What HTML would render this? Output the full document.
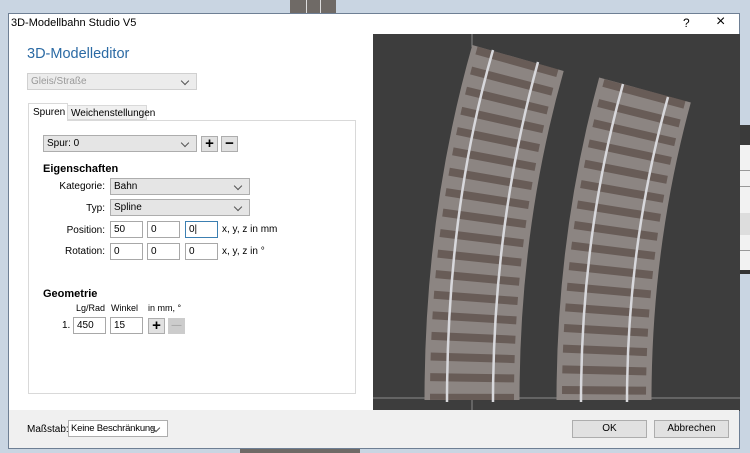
<!DOCTYPE html>
<html><head><meta charset="utf-8"><style>
*{margin:0;padding:0;box-sizing:border-box}
body{width:750px;height:453px;overflow:hidden;background:#c9d5e2;font-family:"Liberation Sans",sans-serif;font-size:10px;color:#000;position:relative}
div{white-space:nowrap}
.a{position:absolute}
.inp{position:absolute;border:1px solid #a8a8a8;background:#fff;height:17px;padding:2px 3px;font-size:10px}
.cb{position:absolute;border:1px solid #adadad;background:#e5e5e5;height:17px;padding:2px 3px;font-size:10px;overflow:hidden}
.cb:after{content:"";position:absolute;right:8px;top:4px;width:5px;height:5px;border-right:1px solid #555;border-bottom:1px solid #555;transform:rotate(45deg)}
.btn{position:absolute;border:1px solid #adadad;background:#e1e1e1;text-align:center;font-size:10px}
.lbl{position:absolute;text-align:right;width:60px}
</style></head><body>
<div class="a" style="left:290px;top:0;width:46px;height:13px;background:#6f6a66"></div>
<div class="a" style="left:306px;top:0;width:1px;height:13px;background:#ddd"></div>
<div class="a" style="left:320px;top:0;width:1px;height:13px;background:#ddd"></div>
<div class="a" style="left:740px;top:125px;width:10px;height:20px;background:#3a3a3a"></div>
<div class="a" style="left:740px;top:145px;width:10px;height:125px;background:#f2f2f2"></div>
<div class="a" style="left:740px;top:170px;width:10px;height:1px;background:#999"></div>
<div class="a" style="left:740px;top:186px;width:10px;height:1px;background:#999"></div>
<div class="a" style="left:740px;top:213px;width:10px;height:22px;background:#ddd"></div>
<div class="a" style="left:740px;top:250px;width:10px;height:1px;background:#999"></div>
<div class="a" style="left:740px;top:270px;width:10px;height:4px;background:#333"></div>
<div class="a" style="left:240px;top:449px;width:120px;height:4px;background:#6f6a66"></div>
<div class="a" style="left:8px;top:13px;width:732px;height:436px;background:#fff;border:1px solid #6e7f94"></div>
<div class="a" style="left:11px;top:17px;font-size:11px">3D-Modellbahn Studio V5</div>
<div class="a" style="left:683px;top:16px;font-size:12px">?</div>
<div class="a" style="left:716px;top:13px;font-size:16px;font-weight:300">×</div>
<div class="a" style="left:27px;top:46px;font-size:14.5px;color:#2b6aa4">3D-Modelleditor</div>
<div class="cb" style="left:27px;top:73px;width:170px;background:#ececec;border-color:#d0d0d0;color:#999">Gleis/Straße</div>
<div class="a" style="left:28px;top:120px;width:328px;height:274px;border:1px solid #d9d9d9"></div>
<div class="a" style="left:28px;top:103px;width:40px;height:18px;border:1px solid #d9d9d9;border-bottom:none;background:#fff;padding:3px 4px">Spuren</div>
<div class="a" style="left:67px;top:105px;width:80px;height:15px;border:1px solid #d9d9d9;background:#f0f0f0;padding:2px 3px">Weichenstellungen</div>
<div class="cb" style="left:43px;top:135px;width:154px">Spur: 0</div>
<div class="btn" style="left:201px;top:136px;width:17px;height:16px;font-size:15px;line-height:13px;font-weight:bold">+</div>
<div class="btn" style="left:221px;top:136px;width:17px;height:16px;font-size:15px;line-height:13px;font-weight:bold">−</div>
<div class="a" style="left:43px;top:163px;font-weight:bold;font-size:11px">Eigenschaften</div>
<div class="lbl" style="left:45px;top:181px">Kategorie:</div>
<div class="cb" style="left:110px;top:178px;width:140px">Bahn</div>
<div class="lbl" style="left:45px;top:203px">Typ:</div>
<div class="cb" style="left:110px;top:199px;width:140px">Spline</div>
<div class="lbl" style="left:45px;top:225px">Position:</div>
<div class="inp" style="left:110px;top:221px;width:33px">50</div>
<div class="inp" style="left:147px;top:221px;width:33px">0</div>
<div class="inp" style="left:185px;top:221px;width:33px;border-color:#3c7fb1">0|</div>
<div class="a" style="left:222px;top:224px">x, y, z in mm</div>
<div class="lbl" style="left:45px;top:246px">Rotation:</div>
<div class="inp" style="left:110px;top:243px;width:33px">0</div>
<div class="inp" style="left:147px;top:243px;width:33px">0</div>
<div class="inp" style="left:185px;top:243px;width:33px">0</div>
<div class="a" style="left:222px;top:246px">x, y, z in °</div>
<div class="a" style="left:43px;top:288px;font-weight:bold;font-size:11px">Geometrie</div>
<div class="a" style="left:76px;top:303px;font-size:9px">Lg/Rad</div>
<div class="a" style="left:111px;top:303px;font-size:9px">Winkel</div>
<div class="a" style="left:148px;top:303px;font-size:9px">in mm, °</div>
<div class="a" style="left:62px;top:320px">1.</div>
<div class="inp" style="left:73px;top:317px;width:33px">450</div>
<div class="inp" style="left:110px;top:317px;width:33px">15</div>
<div class="btn" style="left:148px;top:318px;width:17px;height:16px;font-size:15px;line-height:13px;font-weight:bold">+</div>
<div class="btn" style="left:168px;top:318px;width:17px;height:16px;background:#ccc;border-color:#ccc;color:#999;line-height:13px">—</div>
<svg class="a" style="left:373px;top:34px" width="367" height="377" viewBox="373 34 367 377">
<rect x="373" y="34" width="367" height="377" fill="#3d3d3d"/>
<line x1="373" y1="398" x2="740" y2="398" stroke="#8a8a8a"/>
<line x1="472" y1="34" x2="472" y2="47" stroke="#8a8a8a"/>
<line x1="472" y1="398" x2="472" y2="410" stroke="#8a8a8a"/>
<g fill="none">
<path d="M518,58 Q472,220 472,400" stroke="#8c8582" stroke-width="95"/>
<path d="M518,58 Q472,220 472,400" stroke="#4a3a34" stroke-width="84" stroke-dasharray="8 12" opacity=".55"/>
<path d="M493,50 Q447,210 447,402" stroke="#d8d8dc" stroke-width="2.5"/>
<path d="M538,62 Q493,225 493,402" stroke="#d8d8dc" stroke-width="2.5"/>
<path d="M645,90 Q604,240 604,400" stroke="#8c8582" stroke-width="95"/>
<path d="M645,90 Q604,240 604,400" stroke="#4a3a34" stroke-width="84" stroke-dasharray="8 12" opacity=".55"/>
<path d="M623,84 Q581,235 581,402" stroke="#d8d8dc" stroke-width="2.5"/>
<path d="M668,97 Q627,245 627,402" stroke="#d8d8dc" stroke-width="2.5"/>
</g>
</svg>
<div class="a" style="left:9px;top:410px;width:730px;height:38px;background:#f0f0f0"></div>
<div class="a" style="left:27px;top:424px">Maßstab:</div>
<div class="cb" style="left:68px;top:420px;width:100px;background:#fff;font-size:9.5px;letter-spacing:-0.2px;padding-left:2px">Keine Beschränkung</div>
<div class="btn" style="left:572px;top:420px;width:75px;height:18px;line-height:16px">OK</div>
<div class="btn" style="left:654px;top:420px;width:75px;height:18px;line-height:16px">Abbrechen</div>
</body></html>
